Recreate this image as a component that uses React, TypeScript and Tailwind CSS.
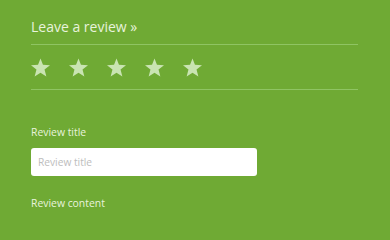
import React from 'react';

function Star() {
  return (
    <svg width="19" height="19" viewBox="0 0 24 23" className="fill-[#c9e4b2]">
      <polygon points="12,0 15.1,8 24,8.6 17.1,14.1 19.4,23 12,18.1 4.6,23 6.9,14.1 0,8.6 8.9,8" />
    </svg>
  );
}

export default function App() {
  return (
    <div
      className="h-[220px] min-h-screen w-full overflow-hidden bg-[#6faa34] pl-[31px] pr-[32px]"
      style={{ fontFamily: '"Open Sans", "Liberation Sans", sans-serif' }}
    >
      {/* Heading */}
      <div className="pt-[17px] text-[14px] leading-[20px] text-[#e8f3dc]">Leave a review »</div>
      <div className="mt-[7px] h-px bg-[#8fc463]" />

      {/* Rating */}
      <div className="mt-[13px] flex h-[19px] gap-[19px]">
        <Star />
        <Star />
        <Star />
        <Star />
        <Star />
      </div>
      <div className="mt-[12px] h-px bg-[#8fc463]" />

      {/* Form */}
      <div className="mt-[34px] text-[10.4px] leading-[16px] text-[#e8f3dc]">Review title</div>
      <input
        type="text"
        placeholder="Review title"
        className="mt-[8px] block h-[28px] w-[226px] rounded-[3px] bg-white px-[7px] text-[10.2px] text-gray-700 outline-none placeholder:text-[#bdbdbd]"
      />
      <div className="mt-[19px] text-[10.4px] leading-[16px] text-[#e8f3dc]">Review content</div>
    </div>
  );
}
